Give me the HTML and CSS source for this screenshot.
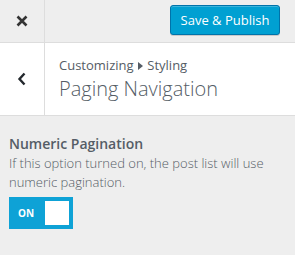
FILE: index.html
```html
<!DOCTYPE html>
<html lang="en">
<head>
    <meta charset="UTF-8">
    <title>Customizer - Paging Navigation</title>
    <link rel="stylesheet" href="styles.css">
</head>
<body>
<div class="topbar">
    <div class="close">
        <svg width="12" height="12" viewBox="0 0 12 12">
            <path d="M1.5 1.5L10.5 10.5M10.5 1.5L1.5 10.5" stroke="#333" stroke-width="2.6" stroke-linecap="butt"/>
        </svg>
    </div>
    <div class="actions">
        <span class="btn-primary">Save &amp; Publish</span>
    </div>
</div>

<div class="section-head">
    <div class="back">
        <svg width="10" height="14" viewBox="0 0 10 14">
            <path d="M7.5 1.5L2.5 7L7.5 12.5" stroke="#23282d" stroke-width="2.4" fill="none"/>
        </svg>
    </div>
    <div class="title">
        <div class="crumb">Customizing
            <svg class="arrow" width="5" height="8" viewBox="0 0 5 8"><path d="M0 0L5 4L0 8Z" fill="#555d66"/></svg>
            Styling</div>
        <div class="name">Paging Navigation</div>
    </div>
</div>

<div class="control">
    <div class="label">Numeric Pagination</div>
    <div class="desc">If this option turned on, the post list will use numeric pagination.</div>
    <div class="switch">
        <span class="switch-text">ON</span>
        <span class="knob"></span>
    </div>
</div>
</body>
</html>
```

FILE: styles.css
```css
* {
    margin: 0;
    padding: 0;
    box-sizing: border-box;
}

body {
    width: 295px;
    height: 255px;
    background-color: #eeeeee;
    font-family: "Open Sans", "Noto Sans", sans-serif;
    color: #555d66;
    overflow: hidden;
}

.topbar {
    display: flex;
    height: 43px;
    border-bottom: 1px solid #dddddd;
}

.close {
    width: 45px;
    border-right: 1px solid #dddddd;
    display: flex;
    align-items: center;
    justify-content: center;
}

.actions {
    flex: 1;
    display: flex;
    justify-content: flex-end;
    align-items: flex-start;
    padding: 5px 15px 0 0;
}

.btn-primary {
    display: inline-block;
    width: 110px;
    height: 30px;
    line-height: 28px;
    text-align: center;
    background-color: #00a0d2;
    border: 1px solid #0073aa;
    border-radius: 3px;
    box-shadow: inset 0 1px 0 rgba(120, 200, 230, 0.5), 0 1px 0 rgba(0, 0, 0, 0.15);
    color: #ffffff;
    font-size: 13px;
}

.section-head {
    display: flex;
    height: 73px;
    background-color: #ffffff;
    border-bottom: 1px solid #dddddd;
}

.back {
    width: 45px;
    border-right: 1px solid #dddddd;
    display: flex;
    align-items: center;
    justify-content: center;
}

.title {
    padding: 12px 0 0 14px;
}

.crumb {
    font-size: 13px;
    line-height: 20px;
}

.arrow {
    vertical-align: 0;
    margin: 0 1px;
}

.name {
    font-size: 20px;
    font-weight: 300;
    line-height: 28px;
}

.control {
    padding: 18px 12px 0 9px;
}

.label {
    font-size: 14px;
    font-weight: 600;
    line-height: 20px;
}

.desc {
    font-size: 13px;
    font-weight: 300;
    line-height: 19px;
    margin-bottom: 5px;
}

.switch {
    display: flex;
    align-items: center;
    justify-content: space-between;
    width: 64px;
    height: 32px;
    padding: 4px;
    background-color: #0ea2d6;
}

.switch-text {
    color: #ffffff;
    font-size: 10px;
    font-weight: 700;
    padding-left: 5px;
}

.knob {
    width: 24px;
    height: 24px;
    background-color: #ffffff;
}
```
